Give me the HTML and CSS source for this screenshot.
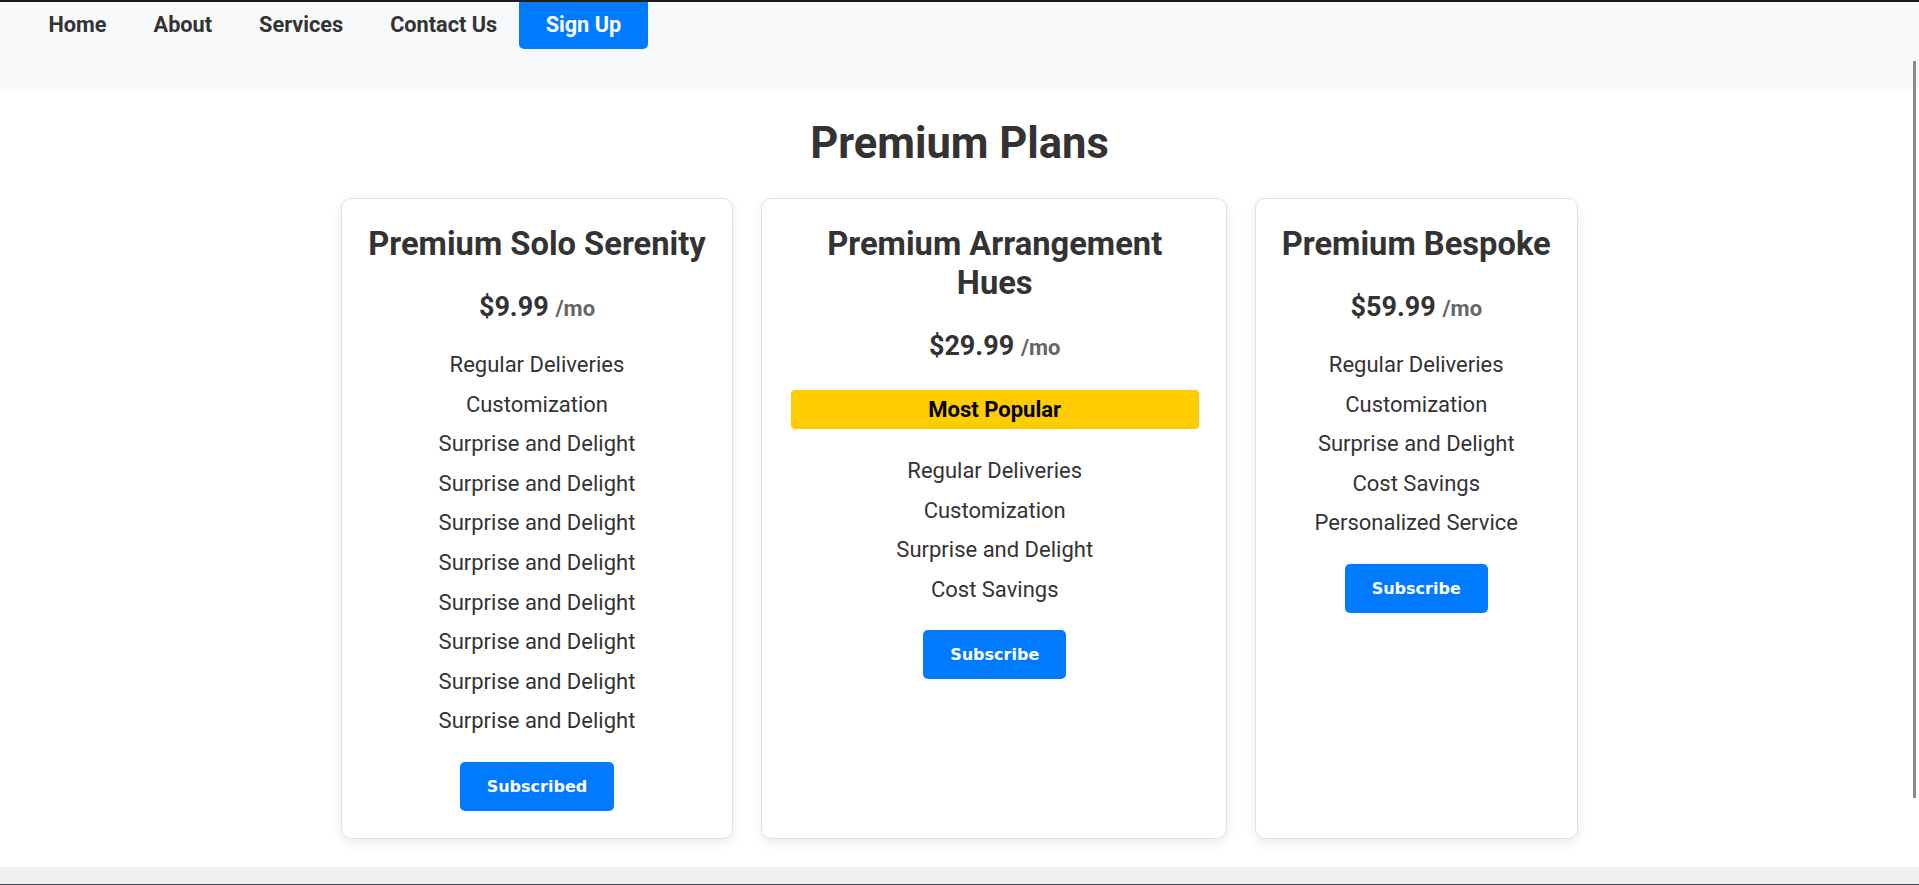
FILE: index.html
```html
<!DOCTYPE html>
<html lang="en">
<head>
<meta charset="utf-8">
<title>Premium Plans</title>
<link rel="stylesheet" href="styles.css">
</head>
<body>
<div class="topline"></div>
<nav class="nav">
  <ul class="nav-list">
    <li><a class="nav-link" href="#">Home</a></li>
    <li><a class="nav-link" href="#">About</a></li>
    <li><a class="nav-link" href="#">Services</a></li>
    <li><a class="nav-link" href="#">Contact Us</a></li>
    <li><a class="nav-link nav-link--cta" href="#">Sign Up</a></li>
  </ul>
</nav>
<main class="plans">
  <h1 class="plans-title">Premium Plans</h1>
  <div class="plan-grid">
    <section class="card">
      <h2 class="card-title">Premium Solo Serenity</h2>
      <p class="price">$9.99 <span class="price-unit">/mo</span></p>
      <ul class="features">
        <li>Regular Deliveries</li>
        <li>Customization</li>
        <li>Surprise and Delight</li>
        <li>Surprise and Delight</li>
        <li>Surprise and Delight</li>
        <li>Surprise and Delight</li>
        <li>Surprise and Delight</li>
        <li>Surprise and Delight</li>
        <li>Surprise and Delight</li>
        <li>Surprise and Delight</li>
      </ul>
      <button class="btn">Subscribed</button>
    </section>
    <section class="card card--featured">
      <h2 class="card-title">Premium Arrangement Hues</h2>
      <p class="price">$29.99 <span class="price-unit">/mo</span></p>
      <div class="badge">Most Popular</div>
      <ul class="features">
        <li>Regular Deliveries</li>
        <li>Customization</li>
        <li>Surprise and Delight</li>
        <li>Cost Savings</li>
      </ul>
      <button class="btn">Subscribe</button>
    </section>
    <section class="card">
      <h2 class="card-title">Premium Bespoke</h2>
      <p class="price">$59.99 <span class="price-unit">/mo</span></p>
      <ul class="features">
        <li>Regular Deliveries</li>
        <li>Customization</li>
        <li>Surprise and Delight</li>
        <li>Cost Savings</li>
        <li>Personalized Service</li>
      </ul>
      <button class="btn">Subscribe</button>
    </section>
  </div>
</main>
<div class="band"></div>
<footer class="footer"></footer>
<div class="scroll-thumb" aria-hidden="true"></div>
</body>
</html>
```
FILE: styles.css
```css
html, body {
  margin: 0;
  padding: 0;
}
body {
  font-family: Roboto, "Liberation Sans", sans-serif;
  color: #333;
  background: #fff;
  height: 885px;
  overflow: hidden;
}
.topline {
  height: 2px;
  background: #1c1c1c;
}
.nav {
  background: #f8f9fa;
  height: 87px;
}
.nav-list {
  list-style: none;
  margin: 0;
  padding: 0 0 0 25px;
  display: flex;
}
.nav-link {
  display: block;
  padding: 10px 23.5px 12px;
  font-size: 21.7px;
  font-weight: 700;
  line-height: 25px;
  color: #333;
  text-decoration: none;
}
.nav-link--cta {
  margin-left: -2px;
  background: #007bff;
  color: #fff;
  border-radius: 0 0 5px 5px;
  padding: 10px 27px 12px;
}
.plans {
  padding: 29px 0 28px;
  text-align: center;
}
.plans-title {
  margin: 0 0 29px;
  font-size: 43.5px;
  line-height: 51px;
  font-weight: 700;
  color: #333;
}
.plan-grid {
  display: flex;
  justify-content: center;
  align-items: stretch;
  gap: 28px;
}
.card {
  display: flex;
  flex-direction: column;
  align-items: center;
  border: 1px solid #e2e2e2;
  border-radius: 10px;
  padding: 26px 26px 27px;
  box-shadow: 0 4px 12px rgba(0, 0, 0, 0.08);
  background: #fff;
}
.card--featured {
  width: 466px;
  box-sizing: border-box;
  padding-left: 29px;
  padding-right: 27px;
}
.card-title {
  margin: 0;
  font-size: 32.7px;
  line-height: 39px;
  font-weight: 700;
  color: #333;
}
.price {
  margin: 27px 0 20px;
  font-size: 27px;
  line-height: 33px;
  font-weight: 700;
  color: #333;
}
.price-unit {
  font-size: 22px;
  color: #666;
}
.badge {
  align-self: stretch;
  margin: 6px 0 22px;
  padding: 7px 0;
  background: #ffcc00;
  color: #000;
  font-size: 22px;
  line-height: 25px;
  font-weight: 700;
  border-radius: 4px;
}
.features {
  list-style: none;
  margin: 0;
  padding: 0;
}
.features li {
  padding: 7px 0;
  font-size: 22px;
  line-height: 25.6px;
  color: #333;
}
.btn {
  margin-top: 21px;
  padding: 15px 27px;
  border: none;
  border-radius: 5px;
  background: #007bff;
  color: #fff;
  font-family: "DejaVu Sans", Verdana, sans-serif;
  font-size: 16px;
  font-weight: 700;
  line-height: 19px;
}
.band {
  height: 17px;
  background: #f0f0f0;
}
.footer {
  height: 40px;
  background: #3d4654;
}
.scroll-thumb {
  position: fixed;
  top: 61px;
  right: 3px;
  width: 3px;
  height: 737px;
  background: #8a8a8a;
}
```
